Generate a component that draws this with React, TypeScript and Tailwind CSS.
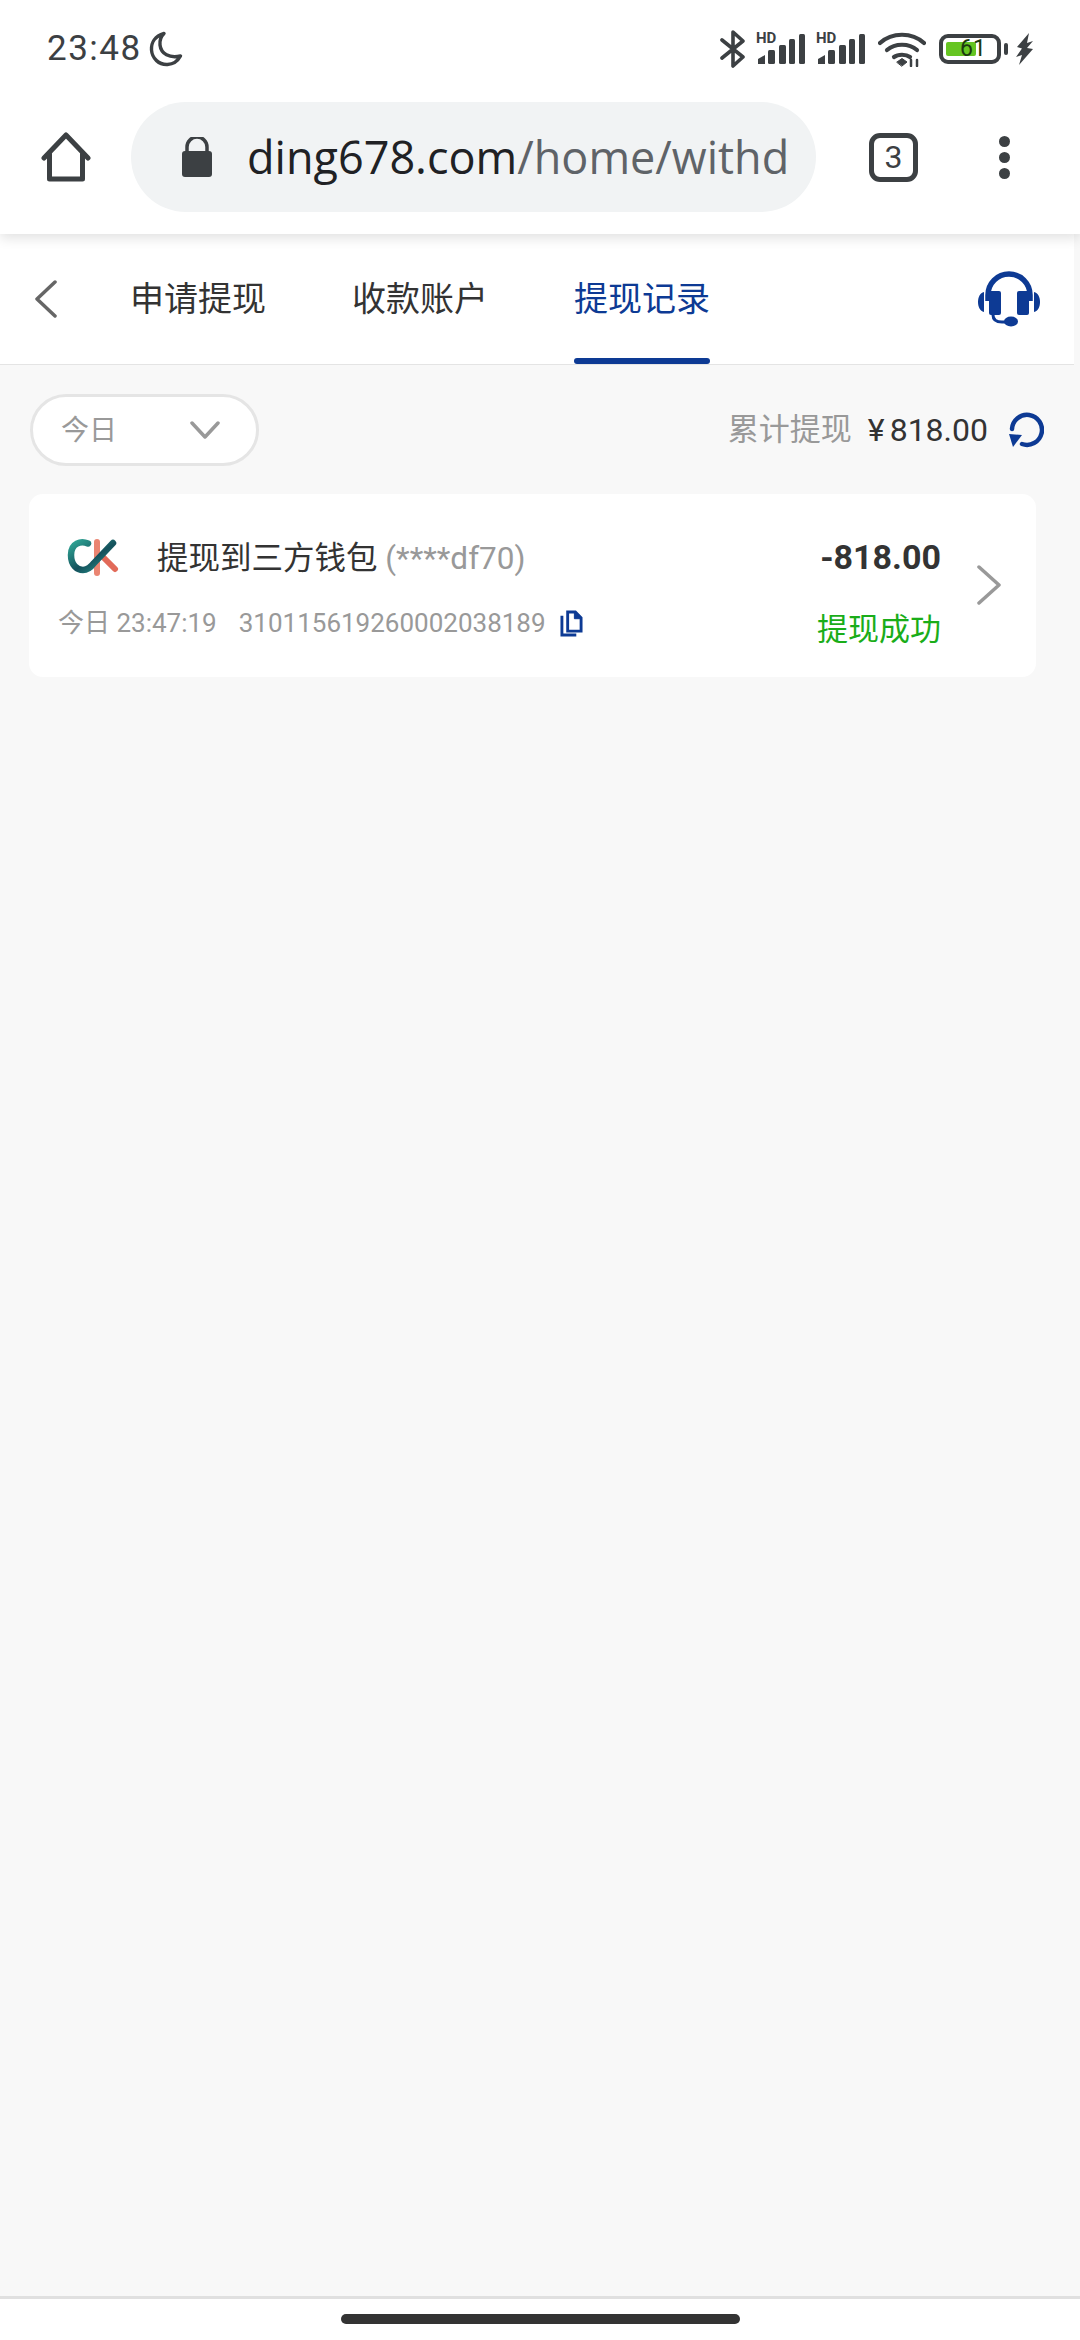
import React from 'react';

const cjk = 'font-["Roboto","Noto_Sans_CJK_SC",sans-serif]';

const SignalIcon: React.FC = () => (
  <div className="relative w-[50px] h-[32px]">
    <span className='absolute left-0 -top-[2px] text-[15px] leading-[15px] font-bold text-[#3c4043] font-["Roboto",sans-serif]'>HD</span>
    <svg viewBox="0 0 50 32" className="absolute inset-0 w-[50px] h-[32px]" fill="#3c4043">
      <path d="M2 31v-5l7-4v9z" />
      <rect x="12" y="17" width="7" height="14" rx="1.5" />
      <rect x="23" y="12" width="7" height="19" rx="1.5" />
      <rect x="33" y="6" width="6" height="25" rx="1.5" />
      <rect x="43" y="1" width="6" height="30" rx="1.5" />
    </svg>
  </div>
);

const StatusBar: React.FC = () => (
  <div className="relative z-20 h-[80px] bg-white flex items-start justify-between pt-[30px] pl-[47px] pr-[46px]">
    <div className="flex items-center h-[38px] text-[#3c4043]">
      <span className='text-[35px] leading-[38px] tracking-[1.5px] font-["Roboto",sans-serif]'>23:48</span>
      <svg viewBox="0 0 34 36" className="w-[36px] h-[36px] ml-[6px]" fill="none" stroke="#3c4043" strokeWidth="3.4" strokeLinecap="round" strokeLinejoin="round">
        <path d="M15 2.5C6 5 2 11.5 2.5 19c.6 8.5 7.5 15 16 14.5 5.5-.3 10-3 13-8.500-11 2.500-19.500-2-20.500-11-.4-4 .9-8.500 4-11.500z" />
      </svg>
    </div>
    <div className="flex items-center h-[38px]">
      <svg viewBox="0 0 26 38" className="w-[26px] h-[38px]" fill="none" stroke="#3c4043" strokeWidth="3.6" strokeLinecap="round" strokeLinejoin="round">
        <path d="M2 10l21 17-10 9V2l10 9L2 28" />
      </svg>
      <div className="ml-[10px]"><SignalIcon /></div>
      <div className="ml-[10px]"><SignalIcon /></div>
      <svg viewBox="0 0 48 36" className="w-[48px] h-[36px] ml-[12px]" fill="none" stroke="#3c4043" strokeWidth="4.2" strokeLinecap="round">
        <path d="M2 12c12-11 32-11 44 0" />
        <path d="M9 19c8-7 22-7 30 0" />
        <path d="M16 26c4-3 12-3 16 0" />
        <path d="M19 31l5-3.500 5 3.500-5 4z" fill="#3c4043" strokeWidth="1" />
        <path d="M33 29v6M39 29v6" strokeWidth="2.500" />
      </svg>
      <div className="relative ml-[13px] w-[62px] h-[30px] rounded-[9px] border-[4px] border-[#3c4043] bg-white">
        <div className="absolute left-[3px] top-[4px] w-[30px] h-[14px] rounded-[2px] bg-[#66c522]" />
        <span className='absolute left-[17px] -top-[2px] text-[23px] leading-[26px] text-[#1c3a10] font-["Roboto",sans-serif]'>61</span>
      </div>
      <div className="ml-[3px] w-[4px] h-[12px] rounded-full bg-[#3c4043]" />
      <svg viewBox="0 0 18 32" className="w-[18px] h-[32px] ml-[8px]" fill="#3c4043">
        <path d="M13 0L1 14l5 1.500L0 24l6-2-3 10L17 16l-6-1 6-7-6 2z" />
      </svg>
    </div>
  </div>
);

const BrowserToolbar: React.FC = () => (
  <div className="relative z-10 h-[154px] bg-white flex items-center shadow-[0_4px_12px_rgba(0,0,0,0.12)]">
    <svg viewBox="0 0 50 50" className="w-[50px] h-[50px] ml-[41px]" fill="none" stroke="#3c4043" strokeWidth="5" strokeLinejoin="round" strokeLinecap="round">
      <path d="M3 26L25 3l22 23" />
      <path d="M8.500 22v25h33V22" />
    </svg>
    <div className="ml-[40px] w-[685px] h-[110px] rounded-full bg-[#f1f3f4] flex items-center pl-[51px]">
      <svg viewBox="0 0 30 40" className="w-[30px] h-[40px] shrink-0" fill="#3c4043">
        <path d="M5 14V10a10 10 0 0 1 20 0v4" fill="none" stroke="#3c4043" strokeWidth="3.500" />
        <rect x="0" y="14" width="30" height="26" rx="3" />
      </svg>
      <div className='ml-[35px] w-[540px] overflow-hidden whitespace-nowrap text-[45px] leading-[56px] text-[#5f6368] font-["Open_Sans",sans-serif]'>
        <span className="text-[#202124]">ding678.com</span>/home/withdraw
      </div>
    </div>
    <div className='ml-[53px] w-[49px] h-[49px] rounded-[11px] border-[5px] border-[#3c4043] flex items-center justify-center text-[32px] text-[#3c4043] font-["Roboto",sans-serif]'>3</div>
    <div className="ml-[81px] flex flex-col gap-[5px]">
      <span className="w-[11px] h-[11px] rounded-full bg-[#3c4043]" />
      <span className="w-[11px] h-[11px] rounded-full bg-[#3c4043]" />
      <span className="w-[11px] h-[11px] rounded-full bg-[#3c4043]" />
    </div>
  </div>
);

const TabBar: React.FC = () => (
  <div className="w-[1074px] h-[131px] bg-white border-b border-[#e4e4e4] flex items-center">
    <svg viewBox="0 0 24 38" className="w-[24px] h-[38px] ml-[34px]" fill="none" stroke="#666666" strokeWidth="3.500" strokeLinecap="round" strokeLinejoin="round">
      <path d="M21 2L3 19l18 17" />
    </svg>
    <div className={`${cjk} ml-[72px] flex items-center gap-[86px] h-full text-[34px] text-[#333333]`}>
      <div>申请提现</div>
      <div>收款账户</div>
      <div className="relative h-full flex items-center text-[#0d3a94]">
        提现记录
        <div className="absolute left-0 right-0 bottom-0 h-[6px] rounded-full bg-[#0d3a94]" />
      </div>
    </div>
    <svg viewBox="0 0 62 56" className="w-[62px] h-[56px] ml-auto mr-[34px]" fill="#0d3a94">
      <path d="M10 30V24a21 21 0 0 1 42 0v6" fill="none" stroke="#0d3a94" strokeWidth="5.500" />
      <rect x="11" y="20" width="12" height="24" rx="2" />
      <rect x="39" y="20" width="12" height="24" rx="2" />
      <path d="M6 21v20C2 40 0 36 0 31s2-9 6-10zM56 21v20c4-1 6-5 6-10s-2-9-6-10z" />
      <path d="M15 44c0 5 4 7 9 7h6" fill="none" stroke="#0d3a94" strokeWidth="3" />
      <ellipse cx="33" cy="50.500" rx="7" ry="5" />
    </svg>
  </div>
);

const RecordCard: React.FC = () => (
  <div className={`${cjk} ml-[29px] mt-[28px] w-[1007px] h-[183px] rounded-[14px] bg-white flex pt-[38px]`}>
    <div className="pl-[29px] flex-1">
      <div className="flex items-center h-[48px]">
        <svg viewBox="0 0 52 40" className="w-[52px] h-[40px] ml-[9px] mt-[4px]">
          <defs>
            <linearGradient id="ckGreen" x1="0" y1="0" x2="1" y2="1">
              <stop offset="0" stopColor="#2fa595" />
              <stop offset="0.55" stopColor="#14515c" />
              <stop offset="1" stopColor="#2a9a90" />
            </linearGradient>
          </defs>
          <path d="M30 4v31" fill="none" stroke="#ea8572" strokeWidth="6" strokeLinecap="round" />
          <path d="M35 18l13 13" fill="none" stroke="#e26a59" strokeWidth="6" strokeLinecap="round" />
          <path d="M21 5.500C14 2.500 4 5 4 17c0 10 6 15 12 15 5 0 8-3 11-7L46 5" fill="none" stroke="url(#ckGreen)" strokeWidth="6.500" strokeLinecap="round" />
        </svg>
        <div className="ml-[38px] mt-[6px] text-[31.500px] leading-[48px] text-[#333333] whitespace-nowrap">
          提现到三方钱包 <span className="text-[#999999]">(****df70)</span>
        </div>
      </div>
      <div className="mt-[25px] flex items-center h-[36px] text-[26px] text-[#999999] whitespace-nowrap">
        <span>今日 23:47:19</span>
        <span className="ml-[22px]">310115619260002038189</span>
        <svg viewBox="0 0 24 28" className="w-[23px] h-[27px] ml-[14px]" fill="none" stroke="#0d3a94" strokeWidth="3">
          <path d="M8 2h8l6 6v14H8z" />
          <path d="M2 6v20h15" />
          <path d="M15 2v7h7z" fill="#0d3a94" strokeWidth="1" />
        </svg>
      </div>
    </div>
    <div className="flex flex-col items-end">
      <div className="mt-[1px] h-[48px] leading-[48px] text-[34px] font-bold text-[#333333]">-818.00</div>
      <div className="mt-[25px] h-[48px] leading-[48px] text-[31px] text-[#1aad19]">提现成功</div>
    </div>
    <svg viewBox="0 0 26 40" className="w-[26px] h-[40px] ml-[35px] mr-[34px] mt-[33px]" fill="none" stroke="#999999" strokeWidth="3.500" strokeLinecap="round" strokeLinejoin="round">
      <path d="M3 2l20 18L3 38" />
    </svg>
  </div>
);

export default function App() {
  return (
    <div className={`${cjk} w-[1080px] h-[2340px] flex flex-col bg-[#f8f8f8]`}>
      <StatusBar />
      <BrowserToolbar />
      <TabBar />

      <div className="flex-1">
        <div className="mt-[29px] ml-[30px] mr-[36px] flex items-center justify-between">
          <div className="w-[229px] h-[72px] rounded-full border-[3px] border-[#e5e5e5] bg-white flex items-center pl-[28px] pr-[36px] justify-between">
            <span className="mt-[2px] text-[28px] text-[#999999]">今日</span>
            <svg viewBox="0 0 30 18" className="w-[30px] h-[18px]" fill="none" stroke="#999999" strokeWidth="3.500" strokeLinecap="round" strokeLinejoin="round">
              <path d="M2 2l13 14L28 2" />
            </svg>
          </div>
          <div className="flex items-center">
            <span className="text-[31px] text-[#999999]">累计提现</span>
            <span className="ml-[16px] text-[32px] text-[#333333]">
              <span className="mr-[5px]">¥</span>818.00
            </span>
            <svg viewBox="0 0 36 36" className="w-[36px] h-[36px] ml-[20px]" fill="none" stroke="#0d3a94" strokeWidth="4.500" strokeLinecap="round">
              <path d="M4 17A15 15 0 1 1 14 32" />
              <path d="M1 22l13 1-9 12z" fill="#0d3a94" stroke="none" />
            </svg>
          </div>
        </div>
        <RecordCard />
      </div>

      <div className="h-[44px] bg-white border-t-[3px] border-[#e0e0e0] flex justify-center pt-[15px]">
        <div className="w-[399px] h-[10px] rounded-full bg-[#333333]" />
      </div>
    </div>
  );
}
